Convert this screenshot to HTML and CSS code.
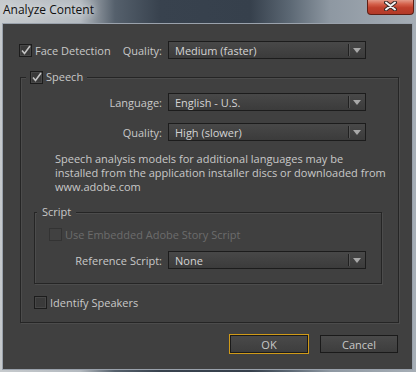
FILE: index.html
```html
<!DOCTYPE html>
<html lang="en">
<head>
    <meta charset="UTF-8">
    <title>Analyze Content</title>
    <link rel="stylesheet" href="styles.css">
</head>
<body>
    <div class="window">
        <div class="titlebar">
            <span class="title">Analyze Content</span>
            <span class="close">
                <svg width="13" height="10" viewBox="0 0 13 10">
                    <path d="M2 1.5 L11 8.5 M11 1.5 L2 8.5" stroke="#3a2a28" stroke-width="4" stroke-linecap="round"/>
                    <path d="M2 1.5 L11 8.5 M11 1.5 L2 8.5" stroke="#f4f4f4" stroke-width="2" stroke-linecap="round"/>
                </svg>
            </span>
        </div>

        <div class="client">
            <div class="row face">
                <label class="check face-check">
                    <span class="box"><svg width="11" height="11" viewBox="0 0 11 11"><path d="M2 5.5 L4.5 8.5 L10 1" fill="none" stroke="#c4c4c4" stroke-width="1.6"/></svg></span>
                    Face Detection
                </label>
                <span class="label">Quality:</span>
                <div class="select"><span class="value">Medium (faster)</span><span class="sep"></span><span class="arrow-zone"><span class="arrow"></span></span></div>
            </div>

            <div class="group speech">
                <div class="group-title">
                    <span class="box"><svg width="11" height="11" viewBox="0 0 11 11"><path d="M2 5.5 L4.5 8.5 L10 1" fill="none" stroke="#c4c4c4" stroke-width="1.6"/></svg></span>
                    Speech
                </div>

                <div class="row lang-row">
                    <span class="label">Language:</span>
                    <div class="select"><span class="value">English - U.S.</span><span class="sep"></span><span class="arrow-zone"><span class="arrow"></span></span></div>
                </div>
                <div class="row quality-row">
                    <span class="label">Quality:</span>
                    <div class="select"><span class="value">High (slower)</span><span class="sep"></span><span class="arrow-zone"><span class="arrow"></span></span></div>
                </div>

                <p class="note">Speech analysis models for additional languages may be<br>installed from the application installer discs or downloaded from<br>www.adobe.com</p>

                <div class="group script">
                    <div class="group-title">Script</div>
                    <label class="check disabled">
                        <span class="box"></span>
                        Use Embedded Adobe Story Script
                    </label>
                    <div class="row ref-row">
                        <span class="label">Reference Script:</span>
                        <div class="select"><span class="value">None</span><span class="sep"></span><span class="arrow-zone"><span class="arrow"></span></span></div>
                    </div>
                </div>

                <label class="check speakers">
                    <span class="box"></span>
                    Identify Speakers
                </label>
            </div>

            <div class="buttons">
                <button class="btn default">OK</button>
                <button class="btn cancel">Cancel</button>
            </div>
        </div>
    </div>
</body>
</html>
```

FILE: styles.css
```css
* {
    box-sizing: border-box;
}

body {
    margin: 0;
    font-family: "Open Sans", "Noto Sans", sans-serif;
    font-size: 11px;
    color: #c8c8c8;
}

.window {
    width: 416px;
    height: 372px;
    display: flex;
    flex-direction: column;
    background: linear-gradient(90deg, #c6cacd 0, #b4bac0 80px, #55606c 115px, #38424e 160px, #36404c 250px, #5c6874 290px, #8e98a2 330px, #a6aeb6 416px);
}

/* title bar */
.titlebar {
    height: 23px;
    flex: none;
    display: flex;
    justify-content: space-between;
    align-items: flex-start;
}

.title {
    font-size: 12px;
    line-height: 20px;
    padding-left: 3px;
    color: #101010;
    text-shadow: 0 0 6px #dde2e6, 0 0 10px #dde2e6;
}

.close {
    width: 47px;
    height: 15px;
    margin-right: 2px;
    display: flex;
    justify-content: center;
    align-items: flex-start;
    padding-top: 1px;
    border: 1px solid #5e1f15;
    border-top: none;
    border-radius: 0 0 4px 4px;
    background: linear-gradient(#e49a88 0, #d4604a 30%, #c0402c 55%, #b23a28 100%);
}

/* client area */
.client {
    flex: 1;
    margin: 0 3px 2px 2px;
    padding-top: 17px;
    border: 1px solid #9aa2ac;
    background: #404040;
    display: flex;
    flex-direction: column;
}

.row {
    display: flex;
    align-items: center;
    height: 18px;
}

.label {
    flex: none;
    text-align: right;
    margin-right: 6px;
    white-space: nowrap;
}

.select {
    width: 198px;
    height: 18px;
    flex: none;
    display: flex;
    align-items: center;
    padding-left: 6px;
    border: 1px solid #1c1c1c;
    background: linear-gradient(#484848, #3b3b3b);
    color: #d4d4d4;
}

.select .value {
    flex: 1;
}

.select .sep {
    width: 1px;
    height: 12px;
    background: #202020;
    box-shadow: 1px 0 0 #565656;
}

.arrow-zone {
    width: 16px;
    display: flex;
    justify-content: center;
}

.arrow {
    border-left: 4px solid transparent;
    border-right: 4px solid transparent;
    border-top: 5px solid #a8a8a8;
}

.check {
    display: flex;
    align-items: center;
    gap: 3px;
    height: 15px;
    white-space: nowrap;
}

.box {
    width: 13px;
    height: 13px;
    flex: none;
    display: flex;
    align-items: center;
    justify-content: center;
    border: 1px solid #1c1c1c;
    background: #3a3a3a;
    box-shadow: inset 0 0 0 1px #474747;
}

.check.disabled {
    color: #6c6c6c;
}

.check.disabled .box {
    border-color: #333;
    background: #414141;
    box-shadow: none;
}

/* face detection row */
.face {
    margin-left: 16px;
}

.face-check {
    width: 100px;
}

.face .label {
    width: 43px;
}

/* group boxes */
.group {
    border: 1px solid #252525;
    box-shadow: 1px 1px 0 #4c4c4c, inset 1px 1px 0 #4c4c4c;
}

.group-title {
    margin-top: -8px;
    height: 14px;
    line-height: 14px;
    width: fit-content;
    display: flex;
    align-items: center;
    gap: 3px;
    background: #404040;
}

.speech {
    margin: 18px 13px 0 17px;
    padding-bottom: 12px;
}

.speech > .group-title {
    margin-left: 5px;
    padding: 0 4px;
}

.speech .label {
    width: 141px;
}

.lang-row {
    margin-top: 9px;
}

.quality-row {
    margin-top: 12px;
}

.note {
    margin: 11px 0 0 34px;
    line-height: 14px;
    white-space: nowrap;
}

.script {
    margin: 18px 16px 0 13px;
    padding-bottom: 14px;
}

.script .group-title {
    margin-left: 2px;
    padding: 0 5px;
}

.script .check {
    margin: 8px 0 0 14px;
}

.script .label {
    width: 127px;
}

.ref-row {
    margin-top: 9px;
}

.speakers {
    margin: 11px 0 0 13px;
}

/* buttons */
.buttons {
    display: flex;
    justify-content: flex-end;
    align-items: center;
    height: 20px;
    margin: 11px 14px 0 0;
}

.btn {
    width: 78px;
    height: 18px;
    padding: 0;
    border: 1px solid #1a1a1a;
    background: linear-gradient(#4a4a4a, #3d3d3d);
    color: #c8c8c8;
    font: inherit;
}

.btn.default {
    width: 80px;
    height: 20px;
    border-color: #d09a18;
    box-shadow: inset 0 0 0 1px #1a1a1a;
}

.btn.cancel {
    margin-left: 11px;
}
```
